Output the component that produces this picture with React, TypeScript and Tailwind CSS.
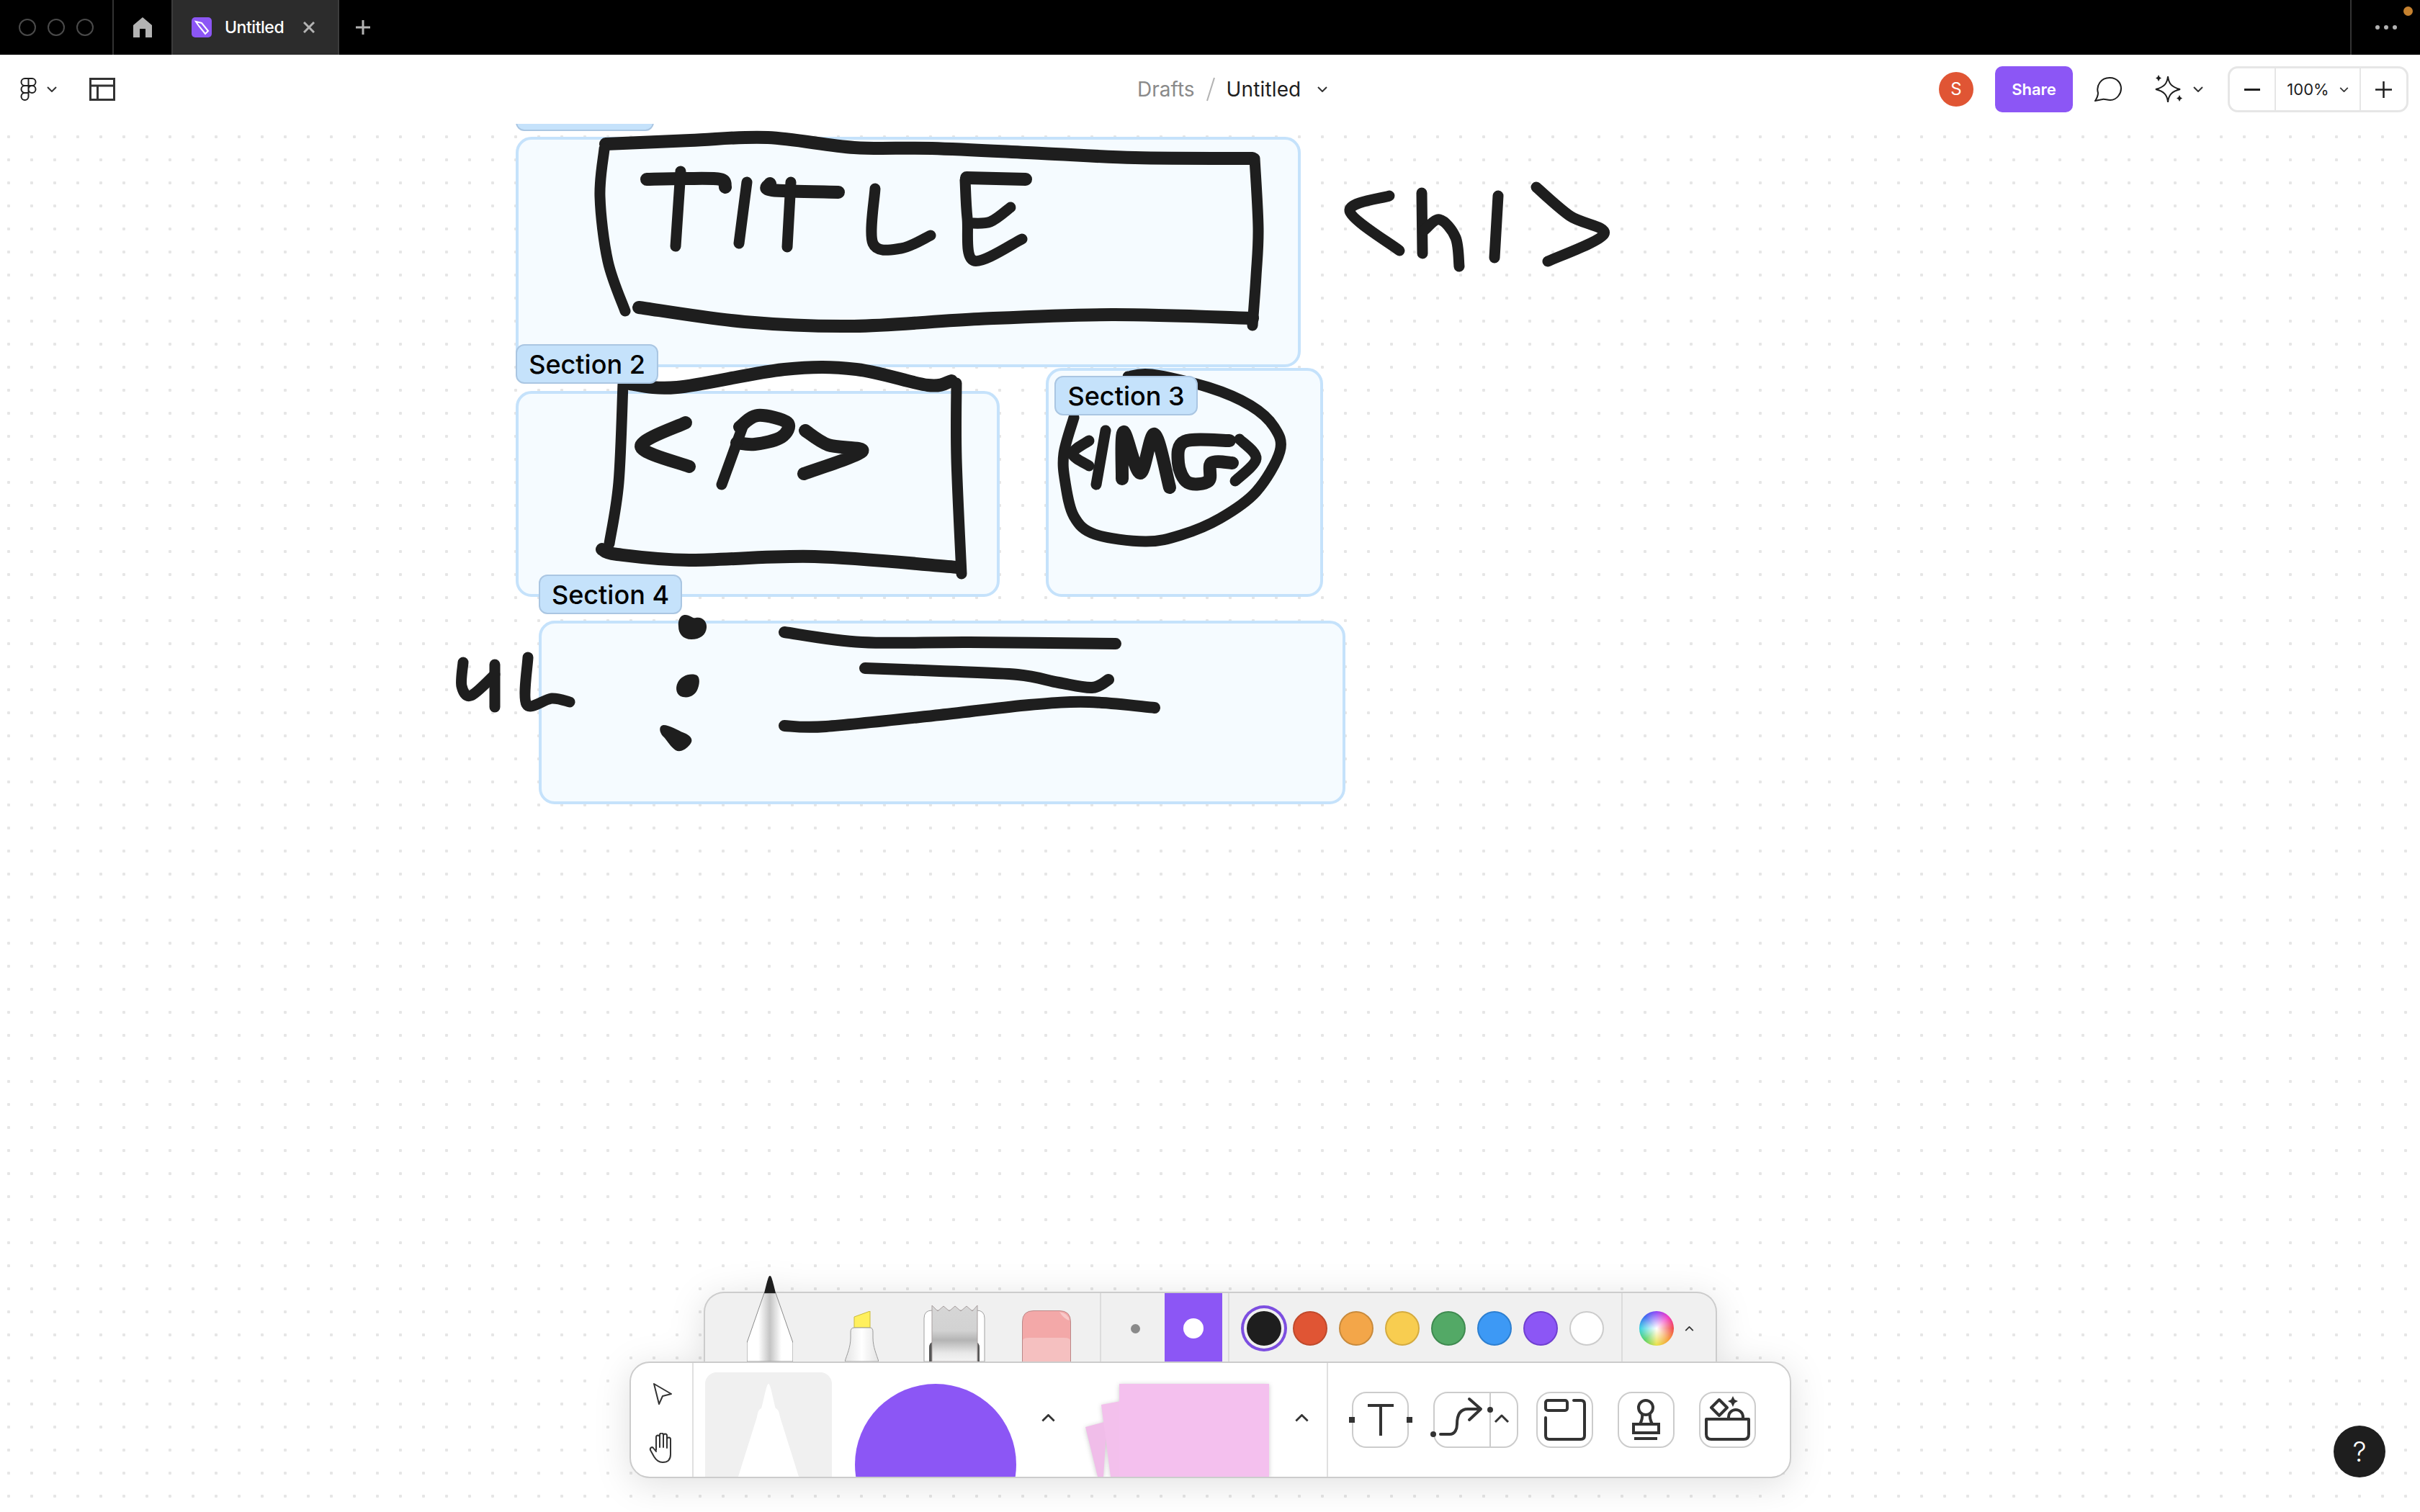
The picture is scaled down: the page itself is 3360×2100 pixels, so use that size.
const font = { fontFamily: "Inter, 'Noto Sans', sans-serif" };

type Pt = [number, number];

// smooth line through hand-drawn points
function smooth(points: Pt[]) {
  let d = `M${points[0][0]} ${points[0][1]}`;
  for (let i = 0; i < points.length - 1; i++) {
    const p0 = points[Math.max(i - 1, 0)];
    const p1 = points[i];
    const p2 = points[i + 1];
    const p3 = points[Math.min(i + 2, points.length - 1)];
    const c1x = p1[0] + (p2[0] - p0[0]) / 6;
    const c1y = p1[1] + (p2[1] - p0[1]) / 6;
    const c2x = p2[0] - (p3[0] - p1[0]) / 6;
    const c2y = p2[1] - (p3[1] - p1[1]) / 6;
    d += ` C${c1x} ${c1y} ${c2x} ${c2y} ${p2[0]} ${p2[1]}`;
  }
  return d;
}

const thick: Pt[][] = [
  [[841, 200], [958, 195], [1066, 191], [1186, 205], [1294, 206], [1446, 213], [1576, 219], [1739, 220]],
  [[1739, 442], [1544, 437], [1359, 443], [1186, 453], [1034, 447], [887, 427]],
  [[874, 533], [940, 538], [1089, 513], [1189, 513], [1288, 535], [1321, 529]],
  [[836, 763], [857, 770], [957, 778], [1131, 773], [1330, 788]],
  [[898, 249], [950, 248], [1000, 249], [1007, 260]],
  [[1069, 255], [1072, 264], [1164, 267]],
  [[1424, 249], [1342, 247]],
  [[952, 587], [890, 620], [957, 648]],
  [[1027, 593], [1052, 577], [1093, 587], [1085, 607], [1048, 617], [1023, 615]],
  [[1118, 598], [1150, 618], [1197, 627], [1116, 658]],
  [[1558, 665], [1560, 600], [1583, 657], [1603, 603], [1624, 677]],
  [[1707, 612], [1645, 613], [1636, 643], [1649, 670], [1678, 668], [1682, 643], [1711, 643]],
];

const bullets: Pt[][] = [
  [[1089, 878], [1197, 892], [1346, 892], [1549, 894]],
  [[1201, 928], [1305, 932], [1413, 937], [1470, 948], [1516, 955], [1539, 944]],
  [[1089, 1008], [1147, 1009], [1305, 993], [1429, 979], [1512, 975], [1603, 983]],
];

const thin: Pt[][] = [
  [[1742, 220], [1747, 317], [1744, 383], [1739, 452]],
  [[839, 207], [833, 273], [844, 363], [868, 432]],
  [[945, 238], [938, 342]],
  [[1037, 253], [1026, 338]],
  [[1098, 253], [1093, 343]],
  [[1215, 262], [1212, 338], [1251, 345], [1292, 327]],
  [[1340, 250], [1343, 303], [1352, 362], [1419, 332]],
  [[1346, 310], [1375, 308], [1403, 288]],
  [[1929, 272], [1874, 293], [1943, 348]],
  [[1974, 268], [1975, 352]],
  [[1977, 320], [1999, 305], [2021, 330], [2026, 370]],
  [[2080, 272], [2075, 358]],
  [[2133, 260], [2180, 300], [2227, 325], [2149, 363]],
  [[865, 533], [859, 670], [846, 755]],
  [[1328, 532], [1328, 637], [1335, 797]],
  [[1031, 593], [1002, 673]],
  [[1566, 523], [1599, 520], [1678, 538], [1736, 563], [1769, 593], [1777, 627], [1744, 683], [1694, 720], [1640, 743], [1590, 752], [1520, 742], [1491, 717], [1479, 670], [1477, 630], [1491, 580]],
  [[1512, 612], [1489, 630], [1512, 647]],
  [[1535, 598], [1522, 673]],
  [[1721, 610], [1744, 637], [1715, 668]],
  [[643, 920], [641, 953], [654, 966], [687, 937]],
  [[687, 923], [687, 982]],
  [[733, 913], [731, 978], [766, 970], [791, 975]],
];

function Drawing() {
  return (
    <svg className="absolute left-0 top-[-172px] w-[3360px] h-[2100px] pointer-events-none" viewBox="0 0 3360 2100" fill="none" strokeLinecap="round" strokeLinejoin="round">
      {thick.map((p, i) => <path key={i} d={smooth(p)} stroke="#1e1e1e" strokeWidth={18} />)}
      {bullets.map((p, i) => <path key={i} d={smooth(p)} stroke="#1e1e1e" strokeWidth={16} />)}
      {thin.map((p, i) => <path key={i} d={smooth(p)} stroke="#1e1e1e" strokeWidth={15} />)}
      <path fill="#1e1e1e" d="M950 854C958 853 962 860 966 858C976 856 982 864 981 872C980 882 972 888 960 888C948 888 942 880 942 870C941 862 944 855 950 854Z" />
      <path fill="#1e1e1e" d="M965 937C972 938 972 948 969 956C966 965 958 970 948 968C939 966 937 956 941 948C945 940 955 935 965 937Z" />
      <path fill="#1e1e1e" d="M921 1007C930 1007 940 1014 950 1018C960 1022 963 1028 958 1034C953 1040 945 1046 938 1042C932 1038 927 1030 922 1024C915 1018 914 1008 921 1007Z" />
    </svg>
  );
}

const sectionBox = "absolute bg-[#f5fbff] border-4 border-[#c5e2fb] rounded-[22px]";
const sectionLabel = "absolute h-[55px] flex items-center justify-center bg-[#c5e2fb] border-2 border-[#aac6e2] rounded-[12px] text-[36px] font-medium text-black whitespace-nowrap";

function Chevron({ up, cls }: { up?: boolean; cls: string }) {
  return (
    <svg className={cls} viewBox="0 0 14 8" fill="none" stroke="#333" strokeWidth={2}>
      <path d={up ? "M1 7l6-6 6 6" : "M1 1l6 6 6-6"} />
    </svg>
  );
}

function TabBar() {
  return (
    <div className="h-[76px] bg-black flex items-stretch shrink-0">
      <div className="w-[158px] flex items-center pl-[26px] gap-[16px] border-r-2 border-[#333]">
        <div className="w-[24px] h-[24px] rounded-full border-2 border-[#4a4a4a]" />
        <div className="w-[24px] h-[24px] rounded-full border-2 border-[#4a4a4a]" />
        <div className="w-[24px] h-[24px] rounded-full border-2 border-[#4a4a4a]" />
      </div>
      <div className="w-[80px] flex items-center justify-center">
        <svg className="w-[26px] h-[28px]" viewBox="0 0 26 28" fill="#b3b3b3">
          <path d="M13 0L26 11V28H17V16H9V28H0V11Z" />
        </svg>
      </div>
      <div className="w-[233px] bg-[#2c2c2c] border-x-2 border-[#3c3c3c] flex items-center pl-[26px]">
        <div className="w-[28px] h-[28px] bg-[#8c56f5] rounded-[5px] flex items-center justify-center">
          <svg className="w-[22px] h-[22px]" viewBox="0 0 22 22" fill="none" stroke="#fff" strokeWidth={2}>
            <path d="M3 3l8 2 9 11-4 4L7 9Z" />
          </svg>
        </div>
        <span className="ml-[18px] text-[23px] font-medium text-white tracking-[-0.02em]">Untitled</span>
        <svg className="ml-[27px] w-[16px] h-[16px]" viewBox="0 0 16 16" stroke="#b3b3b3" strokeWidth={3}>
          <path d="M1 1l14 14M15 1L1 15" />
        </svg>
      </div>
      <div className="w-[66px] flex items-center justify-center">
        <svg className="w-[20px] h-[20px]" viewBox="0 0 20 20" stroke="#b3b3b3" strokeWidth={3}>
          <path d="M10 0v20M0 10h20" />
        </svg>
      </div>
      <div className="ml-auto w-[97px] border-l-2 border-[#333] flex items-center relative pl-[33px] gap-[6px]">
        <div className="w-[6px] h-[6px] rounded-full bg-[#b3b3b3]" />
        <div className="w-[6px] h-[6px] rounded-full bg-[#b3b3b3]" />
        <div className="w-[6px] h-[6px] rounded-full bg-[#b3b3b3]" />
        <div className="absolute right-[10px] top-[9px] w-[13px] h-[13px] rounded-full bg-[#c5812f]" />
      </div>
    </div>
  );
}

function Header() {
  return (
    <div className="h-[96px] bg-white flex items-center shrink-0 relative z-10">
      <div className="w-[1579px] flex items-center pl-[28px]">
        <svg className="w-[23px] h-[32px]" viewBox="0 0 23 32" fill="none" stroke="#1e1e1e" strokeWidth={2}>
          <path d="M11.500 1H6.500a5 5 0 000 10h5ZM11.500 1h5a5 5 0 010 10h-5ZM11.500 11H6.500a5 5 0 000 10h5ZM11.500 21H6.500a5 5 0 105 5ZM21.500 16a5 5 0 11-10 0 5 5 0 0110 0Z" />
        </svg>
        <Chevron cls="ml-[14px] w-[14px] h-[8px]" />
        <svg className="ml-[45px] w-[36px] h-[32px]" viewBox="0 0 36 32" fill="none" stroke="#333" strokeWidth={3}>
          <path d="M1.500 1.500h33v29h-33ZM1.500 11h33M11.500 11v19.500" />
        </svg>
      </div>
      <div className="flex items-center text-[28px]">
        <span className="text-[#8a8a8a]">Drafts</span>
        <svg className="ml-[16px] w-[12px] h-[34px]" viewBox="0 0 12 34" stroke="#b3b3b3" strokeWidth={2}>
          <path d="M11 1L1 33" />
        </svg>
        <span className="ml-[16px] text-[#1e1e1e] tracking-[0.005em]">Untitled</span>
        <Chevron cls="ml-[23px] w-[14px] h-[8px]" />
      </div>
      <div className="ml-auto flex items-center pr-[16px]">
        <div className="w-[48px] h-[48px] rounded-full bg-[#e05534] text-white text-[24px] flex items-center justify-center">S</div>
        <div className="ml-[30px] w-[108px] h-[64px] rounded-[10px] bg-[#8c56f5] text-white text-[22px] font-semibold flex items-center justify-center">Share</div>
        <svg className="ml-[30px] w-[38px] h-[34px]" viewBox="0 0 38 34" fill="none" stroke="#1e1e1e" strokeWidth={2}>
          <path d="M5 22C2 12 9 1 21 1s16 9 16 15-5 16-15 16c-5 0-8-2-11-1l-10 2c2-3 4-6 4-11Z" />
        </svg>
        <svg className="ml-[46px] w-[40px] h-[40px]" viewBox="0 0 40 40" fill="none" stroke="#1e1e1e" strokeWidth={2}>
          <path d="M18 2C19 12 23 17 35 20C23 23 19 28 18 38C17 28 13 23 1 20C13 17 17 12 18 2Z" />
          <path d="M5 0l1.500 3L9 4.500 6.500 6 5 9 3.500 6 1 4.500 3.500 3ZM34 28l1.500 3 2.500 1.500-2.500 1.500-1.500 3-1.500-3-2.500-1.500 2.500-1.500Z" fill="#1e1e1e" stroke="none" />
        </svg>
        <Chevron cls="ml-[13px] w-[14px] h-[8px]" />
        <div className="ml-[34px] w-[251px] h-[64px] rounded-[14px] border-[3px] border-[#e6e6e6] flex items-stretch">
          <div className="w-[64px] flex items-center justify-center border-r-2 border-[#e6e6e6]">
            <div className="w-[22px] h-[3px] bg-[#1e1e1e]" />
          </div>
          <div className="w-[118px] flex items-center justify-center text-[22px] text-[#1e1e1e] border-r-2 border-[#e6e6e6]">
            100%
            <Chevron cls="ml-[14px] w-[13px] h-[7px]" />
          </div>
          <div className="flex-1 flex items-center justify-center">
            <svg className="w-[23px] h-[23px]" viewBox="0 0 23 23" stroke="#1e1e1e" strokeWidth={2.500}>
              <path d="M11.500 0v23M0 11.500h23" />
            </svg>
          </div>
        </div>
      </div>
    </div>
  );
}

function PenTool() {
  return (
    <svg className="ml-[58px] w-[64px] h-[119px] shrink-0" viewBox="0 0 64 119">
      <defs>
        <linearGradient id="penBody" x1="0" x2="1" y1="0" y2="0">
          <stop offset="0.25" stopColor="#ffffff" />
          <stop offset="0.5" stopColor="#c4c4c4" />
          <stop offset="0.75" stopColor="#ffffff" />
        </linearGradient>
      </defs>
      <path d="M24 24L0 93V119H64V93L40 24Z" fill="url(#penBody)" stroke="#8a8a8a" strokeWidth={1} />
      <path d="M32 0C30 0 29 4 24 24H40C35 4 34 0 32 0Z" fill="#1e1e1e" />
    </svg>
  );
}

function Highlighter() {
  return (
    <svg className="ml-[72px] w-[47px] h-[70px] shrink-0" viewBox="0 0 47 70">
      <defs>
        <linearGradient id="hlBody" x1="0" x2="1" y1="0" y2="0">
          <stop offset="0" stopColor="#e4e4e4" />
          <stop offset="0.5" stopColor="#ffffff" />
          <stop offset="1" stopColor="#e4e4e4" />
        </linearGradient>
      </defs>
      <path d="M13 23V8L35 0V23Z" fill="#fff05e" stroke="#c9b93c" strokeWidth={1} />
      <path d="M13 23H35Q39 23 39 29V37C39 50 44 60 47 70H0C3 60 8 50 8 37V29Q8 23 13 23Z" fill="url(#hlBody)" stroke="#9a9a9a" strokeWidth={1} />
    </svg>
  );
}

function Tape() {
  return (
    <svg className="ml-[62px] w-[86px] h-[79px] shrink-0" viewBox="0 0 86 79">
      <defs>
        <linearGradient id="tapeBody" x1="0" x2="0" y1="0" y2="1">
          <stop offset="0" stopColor="#d6d6d6" />
          <stop offset="0.45" stopColor="#d2d2d2" />
          <stop offset="0.62" stopColor="#b4b4b4" />
          <stop offset="0.85" stopColor="#e8e8e8" />
          <stop offset="1" stopColor="#f4f4f4" />
        </linearGradient>
      </defs>
      <path d="M1 79V19Q1 8 12 8H74Q85 8 85 19V79Z" fill="#fff" stroke="#a0a0a0" strokeWidth={1} />
      <path d="M8 79V60Q8 52 14 52H72Q78 52 78 60V79Z" fill="#555" />
      <path d="M12 1L20 9L28 2L36 9L44 2L52 9L60 2L68 9L75 1V79H12Z" fill="url(#tapeBody)" stroke="#a89f9f" strokeWidth={1} />
    </svg>
  );
}

function Eraser() {
  return (
    <svg className="ml-[51px] w-[68px] h-[71px] shrink-0" viewBox="0 0 68 71">
      <path d="M0.500 71V16Q0.500 0.500 16 0.500H52Q67.500 0.500 67.500 16V71Z" fill="#f3a8a8" stroke="#b88" strokeWidth={1} />
      <path d="M1 71V42Q1 38 10 38H58Q67 38 67 42V71Z" fill="#f5c0c0" />
      <path d="M52 2Q64 4 66 14Q58 12 52 2Z" fill="#f8c8c8" />
    </svg>
  );
}

const swatches = [
  "bg-[#e05534] border-[#c04a2c]",
  "bg-[#f3a649] border-[#c88a3c]",
  "bg-[#f8cd50] border-[#d4ab40]",
  "bg-[#53a966] border-[#3f8a50]",
  "bg-[#3d99f5] border-[#2d7fd0]",
  "bg-[#8c56f5] border-[#7040d0]",
  "bg-white border-[#cccccc]",
];

function Tray() {
  return (
    <div className="ml-[103px] w-[1407px] h-[100px] -mb-[3px] bg-[#f0f0f0] border-2 border-[#cccccc] border-b-0 rounded-t-[28px] flex items-stretch">
      <div className="w-[550px] flex items-end pb-[3px] border-r-2 border-[#dcdcdc] shrink-0">
        <PenTool />
        <Highlighter />
        <Tape />
        <Eraser />
      </div>
      <div className="w-[178px] flex items-center border-r-2 border-[#dcdcdc] shrink-0">
        <div className="ml-[41px] w-[13px] h-[13px] rounded-full bg-[#8a8a8a]" />
        <div className="ml-[34px] w-[80px] h-full bg-[#8c56f5] flex items-center justify-center">
          <div className="w-[28px] h-[28px] rounded-full bg-white" />
        </div>
      </div>
      <div className="w-[546px] flex items-center pl-[24px] gap-[16px] border-r-2 border-[#dcdcdc] shrink-0">
        <div className="w-[48px] h-[48px] rounded-full bg-[#1e1e1e] shadow-[0_0_0_4px_#f0f0f0,0_0_0_8px_#7c4ee0] shrink-0" />
        {swatches.map((c) => (
          <div key={c} className={"w-[48px] h-[48px] rounded-full border-2 shrink-0 " + c} />
        ))}
      </div>
      <div className="flex-1 flex items-center pl-[23px]">
        <div className="w-[48px] h-[48px] rounded-full bg-[radial-gradient(circle,#ffffff_0%,#ffffff00_72%),conic-gradient(#8b3df5,#f030c0,#f04040,#f59a30,#e8e040,#50d060,#30d0e0,#3060f0,#8b3df5)]" />
        <Chevron up cls="ml-[15px] w-[13px] h-[7px]" />
      </div>
    </div>
  );
}

const toolButton = "w-[79px] h-[78px] rounded-[20px] border-2 border-[#cccccc] relative shrink-0";

function ToolButtons() {
  return (
    <div className="flex-1 flex items-start pl-[33px] pt-[40px]">
      <div className={toolButton}>
        <svg className="absolute inset-[-2px] w-[79px] h-[78px] overflow-visible" viewBox="0 0 79 78">
          <path d="M22 19h36M40 19v42" stroke="#333" strokeWidth={4} fill="none" />
          <rect x={-4} y={35} width={8} height={8} fill="#333" />
          <rect x={76} y={35} width={8} height={8} fill="#333" />
        </svg>
      </div>
      <div className="ml-[34px] w-[118px] h-[78px] rounded-[20px] border-2 border-[#cccccc] relative shrink-0">
        <div className="absolute left-[76px] top-[-2px] bottom-[-2px] w-[2px] bg-[#cccccc]" />
        <svg className="absolute inset-[-2px] w-[118px] h-[78px] overflow-visible" viewBox="0 0 118 78" fill="none" stroke="#333" strokeWidth={4} strokeLinecap="round" strokeLinejoin="round">
          <path d="M10 59H23C30 59 33 52 33 45C33 32 37 24 48 24H65M50 10L66 24L50 39" />
          <circle cx={0} cy={59} r={4} fill="#333" stroke="none" />
          <circle cx={79} cy={25} r={4} fill="#333" stroke="none" />
          <path d="M86 42L95 33L104 42" strokeWidth={3} strokeLinecap="butt" />
        </svg>
      </div>
      <div className={"ml-[25px] " + toolButton}>
        <svg className="absolute inset-[-2px] w-[79px] h-[78px]" viewBox="0 0 79 78" fill="none" stroke="#333" strokeWidth={4} strokeLinecap="round" strokeLinejoin="round">
          <rect x={13} y={12} width={30} height={14} rx={3} />
          <path d="M52 12H62Q67 12 67 17V61Q67 66 62 66H18Q13 66 13 61V36" />
        </svg>
      </div>
      <div className={"ml-[34px] " + toolButton}>
        <svg className="absolute inset-[-2px] w-[79px] h-[78px]" viewBox="0 0 79 78" fill="none" stroke="#333" strokeWidth={4}>
          <circle cx={39} cy={22} r={10} />
          <path d="M34 31C35 37 33 41 31 45M45 31C44 37 46 41 48 45" />
          <rect x={22} y={45} width={35} height={12} />
          <path d="M23 65H55" />
        </svg>
      </div>
      <div className={"ml-[34px] " + toolButton}>
        <svg className="absolute inset-[-2px] w-[79px] h-[78px]" viewBox="0 0 79 78" fill="none" stroke="#333" strokeWidth={4} strokeLinejoin="round">
          <path d="M28 11L39 22L28 33L17 22Z" />
          <path d="M47 6L49.500 11L54 13L49.500 15.500L47 21L44.500 15.500L40 13L44.500 11Z" fill="#333" stroke="none" />
          <path d="M41 38V35A10 10 0 0161 35V38" />
          <path d="M10 38H69V59Q69 66 62 66H17Q10 66 10 59Z" />
        </svg>
      </div>
    </div>
  );
}

function BottomBar() {
  return (
    <div className="relative w-[1613px] h-[162px] bg-white border-2 border-[#cccccc] rounded-[28px] flex items-stretch overflow-hidden">
      <div className="w-[87px] border-r-2 border-[#e0e0e0] flex flex-col items-center pt-[28px] shrink-0">
        <svg className="ml-[2px] w-[28px] h-[30px]" viewBox="0 0 28 30" fill="none" stroke="#333" strokeWidth={2} strokeLinejoin="round">
          <path d="M2 1L26 15L14 18L9 29Z" />
        </svg>
        <svg className="mt-[39px] w-[36px] h-[42px]" viewBox="0 0 36 42" fill="none" stroke="#333" strokeWidth={2} strokeLinecap="round" strokeLinejoin="round">
          <path d="M10 24V6a2.500 2.500 0 015 0V20M15 20V3a2.500 2.500 0 015 0V20M20 20V4a2.500 2.500 0 015 0V21M25 21V9a2.500 2.500 0 015 0V30C30 37 26 41 19 41 13 41 10 38 7 33L2 24C1 21 4 19 6 21L10 26" />
        </svg>
      </div>
      <div className="w-[881px] border-r-2 border-[#e0e0e0] flex items-end shrink-0 relative">
        <div className="ml-[16px] w-[176px] h-[145px] bg-[#f0f0f0] rounded-t-[16px] flex items-end justify-center shrink-0">
          <svg className="w-[84px] h-[129px]" viewBox="0 0 84 129" fill="#fff">
            <path d="M42 0C39 0 35 25 32 34C28 36 27 40 26 46L0 129H84L58 46C57 40 56 36 52 34C49 25 45 0 42 0Z" />
          </svg>
        </div>
        <div className="ml-[32px] w-[224px] h-[129px] overflow-hidden shrink-0">
          <div className="w-[224px] h-[224px] rounded-full bg-[#8c56f5]" />
        </div>
        <Chevron up cls="ml-[35px] mb-[76px] w-[19px] h-[11px] shrink-0" />
        <svg className="ml-[42px] w-[255px] h-[129px] shrink-0 drop-shadow-[0_1px_3px_rgba(0,0,0,0.2)]" viewBox="0 0 255 129">
          <path d="M0 60L30 52L25 129H17Z" fill="#f0bde9" />
          <path d="M22 29L60 22V129H35Z" fill="#f3c0ec" />
          <rect x={47} y={0} width={208} height={129} fill="#f4c0ee" />
        </svg>
        <Chevron up cls="ml-[36px] mb-[76px] w-[19px] h-[11px] shrink-0" />
      </div>
      <ToolButtons />
    </div>
  );
}

export default function App() {
  return (
    <div className="w-[3360px] h-[2100px] flex flex-col overflow-hidden bg-white" style={font}>
      <TabBar />
      <Header />
      <div className="relative flex-1 overflow-hidden bg-white bg-[radial-gradient(circle,#e6e6e6_2px,transparent_2.500px)] bg-[length:32px_32px] bg-[position:-4px_2px]">
        <div className={sectionBox + " left-[716px] top-[18px] w-[1090px] h-[320px]"} />
        <div className={sectionBox + " left-[716px] top-[371px] w-[672px] h-[286px]"} />
        <div className={sectionBox + " left-[1452px] top-[339px] w-[385px] h-[318px]"} />
        <div className={sectionBox + " left-[748px] top-[690px] w-[1120px] h-[255px]"} />
        <Drawing />
        <div className={sectionLabel + " left-[716px] top-[-45px] w-[192px]"} />
        <div className={sectionLabel + " left-[716px] top-[306px] w-[198px]"}>Section 2</div>
        <div className={sectionLabel + " left-[1464px] top-[350px] w-[199px]"}>Section 3</div>
        <div className={sectionLabel + " left-[748px] top-[626px] w-[199px]"}>Section 4</div>

        <div className="absolute left-[874px] top-[1622px] w-[1613px] drop-shadow-[0_8px_24px_rgba(0,0,0,0.12)]">
          <Tray />
          <BottomBar />
        </div>

        <div className="absolute left-[3240px] top-[1808px] w-[72px] h-[72px] rounded-full bg-[#1e1e1e] text-white text-[38px] font-light flex items-center justify-center">?</div>
      </div>
    </div>
  );
}
